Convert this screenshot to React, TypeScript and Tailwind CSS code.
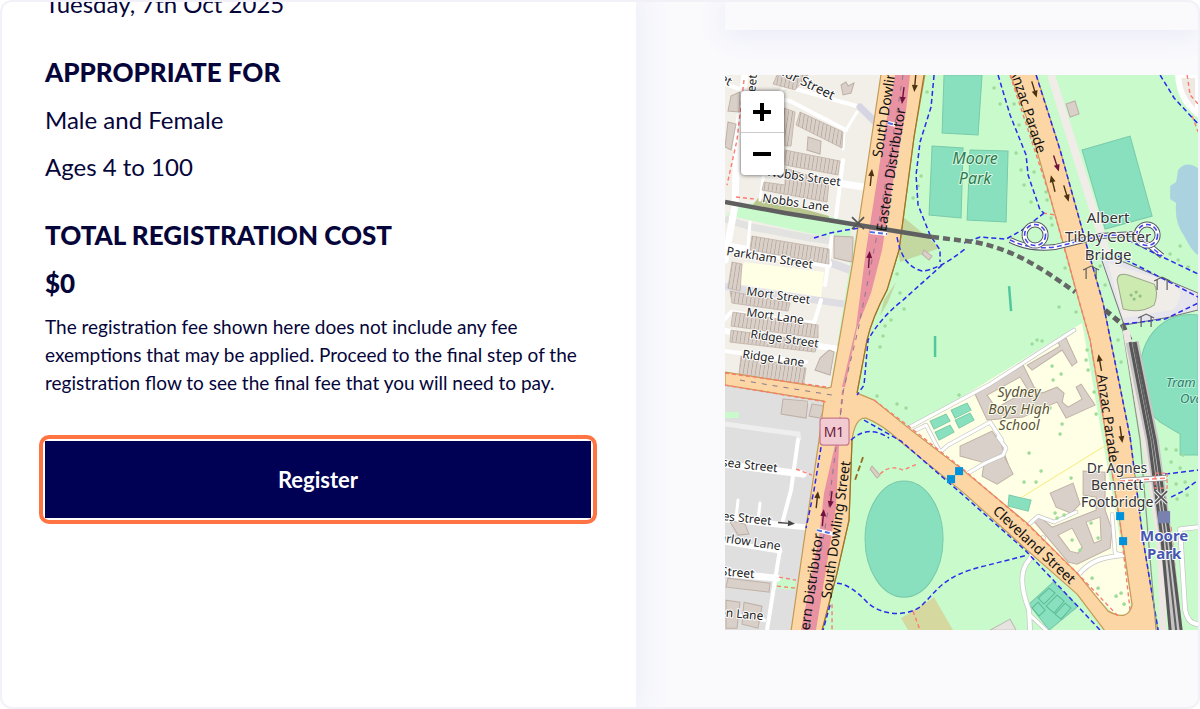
import React from "react";

type Pt = { x: number; y: number };

type Label = {
  text: string;
  x: number;
  y: number;
  angle?: number;
  size?: number;
  anchor?: "start" | "middle" | "end";
  kind?: "road" | "bare" | "place" | "park" | "school" | "station" | "oval";
};

const LABELS: Label[] = [
  { text: "South Dowling Street", x: 882, y: 158, angle: -81, size: 14, kind: "bare" },
  { text: "Eastern Distributor", x: 886, y: 232, angle: -81, size: 14, kind: "bare" },
  { text: "South Dowling Street", x: 831, y: 599, angle: -82, size: 14, kind: "bare" },
  { text: "Eastern Distributor", x: 823, y: 534, angle: -82, size: 14, anchor: "end", kind: "bare" },
  { text: "Anzac Parade", x: 1037, y: 154, angle: 72, size: 14, anchor: "end", kind: "bare" },
  { text: "Anzac Parade", x: 1097, y: 375, angle: 82, size: 14, kind: "bare" },
  { text: "Cleveland Street", x: 992, y: 512, angle: 43, size: 14, kind: "bare" },
  { text: "Street", x: 754, y: 108, angle: -85, size: 12 },
  { text: "Street", x: 729, y: 86, angle: 28, size: 12, anchor: "end" },
  { text: "Arthur Street", x: 832, y: 100, angle: 26, size: 13, anchor: "end" },
  { text: "Nobbs Street", x: 840, y: 186, angle: 8, size: 12, anchor: "end" },
  { text: "Nobbs Lane", x: 762, y: 202, angle: 8, size: 12 },
  { text: "Parkham Street", x: 726, y: 255, angle: 9, size: 12 },
  { text: "Mort Street", x: 746, y: 295, angle: 8, size: 12 },
  { text: "Mort Lane", x: 746, y: 316, angle: 8, size: 12 },
  { text: "Ridge Street", x: 750, y: 338, angle: 8, size: 12 },
  { text: "Ridge Lane", x: 742, y: 358, angle: 8, size: 12 },
  { text: "Chelsea Street", x: 777, y: 472, angle: 6, size: 12, anchor: "end" },
  { text: "James Street", x: 771, y: 525, angle: 6, size: 12, anchor: "end" },
  { text: "Marlow Lane", x: 780, y: 550, angle: 8, size: 12, anchor: "end" },
  { text: "High Street", x: 754, y: 578, angle: 5, size: 12, anchor: "end" },
  { text: "Dawson Lane", x: 763, y: 620, angle: 5, size: 12, anchor: "end" },
  { text: "Moore", x: 975, y: 164, size: 16, kind: "park", anchor: "middle" },
  { text: "Park", x: 975, y: 184, size: 16, kind: "park", anchor: "middle" },
  { text: "Albert", x: 1108, y: 223, size: 15, kind: "place", anchor: "middle" },
  { text: "Tibby Cotter", x: 1108, y: 242, size: 15, kind: "place", anchor: "middle" },
  { text: "Bridge", x: 1108, y: 260, size: 15, kind: "place", anchor: "middle" },
  { text: "Sydney", x: 1019, y: 397, size: 14, kind: "school", anchor: "middle" },
  { text: "Boys High", x: 1019, y: 414, size: 14, kind: "school", anchor: "middle" },
  { text: "School", x: 1019, y: 430, size: 14, kind: "school", anchor: "middle" },
  { text: "Dr Agnes", x: 1117, y: 473, size: 14, kind: "place", anchor: "middle" },
  { text: "Bennett", x: 1117, y: 490, size: 14, kind: "place", anchor: "middle" },
  { text: "Footbridge", x: 1117, y: 507, size: 14, kind: "place", anchor: "middle" },
  { text: "Moore", x: 1164, y: 541, size: 15, kind: "station", anchor: "middle" },
  { text: "Park", x: 1164, y: 559, size: 15, kind: "station", anchor: "middle" },
  { text: "Tram", x: 1166, y: 387, size: 13, kind: "oval" },
  { text: "Oval", x: 1180, y: 403, size: 13, kind: "oval" },
];

const LABEL_CLASS: Record<string, string> = {
  road: "fill-[#222222] stroke-white",
  bare: "fill-[#111111] stroke-transparent",
  place: "fill-[#333333] stroke-white/80",
  park: "fill-[#2d7a52] stroke-[#d8f8e0] italic",
  school: "fill-[#5a5436] stroke-[#fffff0] italic",
  station: "fill-[#4657b0] stroke-white font-bold",
  oval: "fill-[#2f7d68] stroke-[#b4efd8] italic",
};

const TERRACES = [
  "777,75 808,75 795,90 773,84",
  "784,108 795,112 791,146 785,146",
  "800,112 843,132 842,148 796,125",
  "785,150 840,161 838,175 785,165",
  "785,168 829,182 827,202 762,190 764,182 785,185",
  "752,236 829,249 829,264 750,250",
  "730,291 790,303 788,311 732,303",
  "733,312 818,325 818,338 731,326",
  "731,330 818,342 815,352 730,342",
  "741,356 806,368 803,388 739,374",
  "732,262 742,264 740,291 728,288",
];

const BUILDINGS = [
  "841,85 846,82 848,86 854,83 851,93 843,95",
  "808,137 821,141 820,154 807,150",
  "731,96 740,92 739,112 728,111",
  "728,122 736,124 731,150 725,147",
  "834,236 853,237 852,262 834,258",
  "829,350 834,352 830,375 815,370 820,358",
  "783,399 808,401 806,418 781,414",
  "812,404 825,406 820,418 809,416",
  "729,520 745,524 749,534 738,535",
  "728,578 770,583 769,592 726,587",
  "726,600 740,602 737,628 726,628",
  "744,602 762,606 758,628 742,624",
  "872,466 880,475 877,478 870,469",
  "924,250 932,256 929,260 922,254",
  "1066,104 1075,101 1079,114 1070,117",
  "975,394 1023,365 1034,387 1042,393 1057,387 1064,393 1062,402 1068,407 1082,399 1076,387 1081,384 1095,405 1066,418 1057,402 1038,410 1023,417 987,420",
  "1027,365 1060,346 1057,341 1066,338 1077,362 1072,366 1062,350 1032,370",
  "960,446 992,431 1001,444 1008,464 994,467 982,462 960,456",
  "984,463 1003,454 1013,474 997,484 982,476",
  "1050,493 1073,483 1080,504 1071,513 1056,507",
  "1033,520 1040,517 1052,527 1096,510 1096,497 1083,495 1083,471 1105,472 1105,510 1112,530 1110,548 1077,564 1068,562",
];

const WHITE_STREETS: { d: string; w?: number }[] = [
  { d: "M725 84 L745 91 L790 101 L846 130", w: 4 },
  { d: "M745 75 L737 140 L735 205 L725 260", w: 7 },
  { d: "M785 86 L860 107", w: 4 },
  { d: "M846 130 L857 112", w: 3 },
  { d: "M844 130 L843 149", w: 3 },
  { d: "M843 160 L836 217", w: 4 },
  { d: "M764 172 L864 187", w: 7 },
  { d: "M764 172 L760 200", w: 3 },
  { d: "M725 246 L828 264", w: 8 },
  { d: "M832 236 L825 285", w: 4 },
  { d: "M750 222 L748 245", w: 3 },
  { d: "M725 319 L731 312 L814 323 L821 300", w: 4 },
  { d: "M725 331 L838 349", w: 6 },
  { d: "M725 351 L806 362", w: 4 },
  { d: "M800 70 L778 94", w: 3 },
  { d: "M725 464 L803 474", w: 7 },
  { d: "M798 440 L791 490 L783 520", w: 4 },
  { d: "M725 519 L804 527", w: 6 },
  { d: "M725 542 L780 551", w: 5 },
  { d: "M780 549 L767 630", w: 4 },
  { d: "M725 573 L777 578", w: 7 },
  { d: "M725 613 L764 620", w: 4 },
  { d: "M738 500 L736 518", w: 3 },
  { d: "M760 503 L758 520", w: 3 },
  { d: "M787 402 L808 402", w: 3 },
];

const PARK_STREETS: { d: string; w?: number }[] = [
  { d: "M908 428 L990 384 L1074 330", w: 3 },
  { d: "M912 432 L926 425 L940 452 L948 445 L990 422 L1002 440", w: 3 },
  { d: "M968 473 L985 463 L1003 455 L1006 448 L998 437", w: 3 },
  { d: "M1028 525 L1038 516 L1054 522 L1076 512", w: 3 },
  { d: "M1078 575 C1090 560 1103 557 1124 555", w: 4 },
  { d: "M1124 555 L1115 553 L1112 514", w: 3 },
  { d: "M1043 538 L1029 560 C1018 572 1022 592 1029 610 L1030 630", w: 4 },
  { d: "M1029 614 L1046 630", w: 3 },
  { d: "M1198 527 L1180 529 L1185 610 Q1188 624 1198 624", w: 4 },
];

const BLUE_PATHS = [
  "M934 75 L931 107 L920 142 L916 175 L918 205 L930 235 L940 250 L940 262",
  "M998 75 L1010 115 L1026 155 L1028 175 L1040 210 L1044 213",
  "M1044 213 L1022 230 L1006 239 L980 237 L964 243",
  "M1036 75 L1060 150 L1087 247 L1103 303 L1130 437",
  "M1160 75 L1174 98 L1198 124",
  "M814 238 L830 233 L846 230 L859 228",
  "M897 237 Q902 266 922 271 Q938 270 965 249",
  "M942 265 L903 300 Q880 318 868 340 L864 385 L857 395",
  "M864 420 L901 441 L962 494 L1025 550 L1100 630",
  "M851 440 Q868 424 889 438",
  "M837 583 Q850 584 867 602 C880 615 905 617 920 607 C938 590 942 576 984 566 L1027 555",
  "M1130 437 L1143 540 L1158 630",
  "M821 447 L814 490 L806 528",
  "M830 605 L823 630",
  "M1118 256 L1150 272 L1198 297",
  "M1124 324 L1165 319 L1198 303",
  "M1128 240 L1152 252 L1198 274",
  "M1165 474 L1198 470",
  "M1171 497 L1183 491 L1198 480",
];

const RED_PATHS = [
  "M744 80 L737 140 L727 185",
  "M736 197 L755 199",
  "M725 385 L827 402",
  "M725 373 L827 387",
  "M1010 75 L1050 197 L1075 287 L1090 340 L1103 417 L1110 460 L1120 523 L1130 610",
  "M1043 213 L1056 215",
  "M796 469 L812 475",
  "M779 577 L796 580",
  "M777 586 L796 588",
  "M880 474 Q890 464 903 470 L917 464",
  "M832 604 L832 630",
  "M913 611 L920 630",
  "M874 400 L911 428 L964 470 L1027 524 L1080 576 L1118 616",
  "M1187 75 L1190 95 L1198 104",
  "M1192 116 L1198 132",
  "M1171 527 L1176 580 L1181 630",
];

const TREES: Pt[] = [
  { x: 994, y: 88 }, { x: 1000, y: 104 }, { x: 1014, y: 104 }, { x: 1019, y: 125 }, { x: 1016, y: 153 },
  { x: 1021, y: 170 }, { x: 1034, y: 172 }, { x: 1024, y: 185 }, { x: 1031, y: 202 }, { x: 1046, y: 192 },
  { x: 1051, y: 218 }, { x: 1052, y: 225 }, { x: 1047, y: 200 }, { x: 921, y: 176 }, { x: 918, y: 186 },
  { x: 913, y: 198 }, { x: 909, y: 160 }, { x: 927, y: 92 }, { x: 897, y: 274 }, { x: 900, y: 293 },
  { x: 904, y: 309 }, { x: 891, y: 320 }, { x: 885, y: 326 }, { x: 880, y: 347 }, { x: 883, y: 336 },
  { x: 897, y: 404 }, { x: 877, y: 396 }, { x: 906, y: 408 }, { x: 959, y: 395 }, { x: 1032, y: 344 },
  { x: 1037, y: 340 }, { x: 1042, y: 341 }, { x: 1052, y: 366 }, { x: 1061, y: 374 }, { x: 1053, y: 380 },
  { x: 1050, y: 408 }, { x: 1062, y: 424 }, { x: 1060, y: 434 }, { x: 1024, y: 482 }, { x: 1036, y: 482 },
  { x: 1029, y: 453 }, { x: 1041, y: 471 }, { x: 1071, y: 478 }, { x: 1055, y: 513 }, { x: 1064, y: 515 },
  { x: 1057, y: 518 }, { x: 1091, y: 523 }, { x: 1098, y: 538 }, { x: 1072, y: 540 }, { x: 1080, y: 550 },
  { x: 1092, y: 578 }, { x: 1098, y: 588 }, { x: 1116, y: 596 }, { x: 1121, y: 593 }, { x: 1124, y: 604 },
  { x: 1166, y: 449 }, { x: 1176, y: 450 }, { x: 1183, y: 455 }, { x: 1171, y: 462 }, { x: 1180, y: 468 },
  { x: 1185, y: 482 }, { x: 1176, y: 484 }, { x: 1187, y: 495 }, { x: 1177, y: 499 }, { x: 1087, y: 350 },
  { x: 1088, y: 370 }, { x: 1086, y: 360 }, { x: 1094, y: 392 }, { x: 1096, y: 414 }, { x: 1065, y: 268 },
  { x: 1100, y: 266 }, { x: 1105, y: 285 }, { x: 1118, y: 340 }, { x: 1121, y: 362 }, { x: 1170, y: 254 },
  { x: 1178, y: 260 }, { x: 1188, y: 267 }, { x: 1180, y: 246 }, { x: 1059, y: 307 }, { x: 1076, y: 312 },
];

const ARROWS: (Pt & { angle: number; color: string })[] = [
  { x: 903, y: 95, angle: 187, color: "#70123c" },
  { x: 915, y: 83, angle: 185, color: "#4c3210" },
  { x: 871, y: 178, angle: 6, color: "#4c3210" },
  { x: 869, y: 260, angle: 4, color: "#70123c" },
  { x: 1034, y: 89, angle: 163, color: "#4c3210" },
  { x: 1056, y: 163, angle: 162, color: "#70123c" },
  { x: 1053, y: 184, angle: -14, color: "#4c3210" },
  { x: 1066, y: 193, angle: 163, color: "#4c3210" },
  { x: 1100, y: 363, angle: -10, color: "#4c3210" },
  { x: 1121, y: 434, angle: 172, color: "#4c3210" },
  { x: 817, y: 500, angle: 6, color: "#4c3210" },
  { x: 831, y: 499, angle: 187, color: "#70123c" },
  { x: 823, y: 518, angle: 5, color: "#70123c" },
  { x: 786, y: 523, angle: 94, color: "#444444" },
];

function Roundabout({ x, y }: Pt) {
  return (
    <g fill="none">
      <circle cx={x} cy={y} r="10.5" stroke="#555866" strokeWidth="6" />
      <circle cx={x} cy={y} r="10.5" stroke="#ffffff" strokeWidth="4" />
      <circle cx={x} cy={y} r="10.5" stroke="#4646e8" strokeWidth="1.6" strokeDasharray="5 3" />
    </g>
  );
}

function Cross({ x, y, r }: Pt & { r: number }) {
  return (
    <path
      d={`M${x - r} ${y - r} L${x + r} ${y + r} M${x + r} ${y - r} L${x - r} ${y + r}`}
      stroke="#555555"
      strokeWidth="1.7"
      fill="none"
    />
  );
}

function Gate({ x, y }: Pt) {
  return (
    <path
      d={`M${x - 8} ${y - 3} L${x} ${y - 7} L${x + 8} ${y - 3} M${x - 5} ${y - 5} V${y + 6} M${x + 5} ${y - 5} V${y + 6}`}
      stroke="#5c5c5c"
      strokeWidth="1.2"
      fill="none"
    />
  );
}

function StreetMap() {
  return (
    <svg
      viewBox="725 75 473 555"
      preserveAspectRatio="xMinYMin slice"
      className="block h-full w-full font-['Noto_Sans','Open_Sans',sans-serif]"
      role="img"
      aria-label="Map of Moore Park"
    >
      <defs>
        <pattern id="terrace" width="4" height="20" patternUnits="userSpaceOnUse" patternTransform="rotate(9)">
          <rect width="4" height="20" fill="#d9d0c9" />
          <path d="M0 0 V20" stroke="#b5a498" strokeWidth="1.4" />
        </pattern>
      </defs>

      {/* Land use */}
      <rect x="725" y="75" width="473" height="555" fill="#c8facc" />
      <polygon points="725,75 885,75 850,265 829,395 725,380" fill="#f2efe9" />
      <polygon points="725,380 832,392 818,445 791,630 725,630" fill="#dfdfdf" />
      <polygon points="740,206 765,200 852,222 850,242 726,215" fill="#c8facc" />
      <polygon points="758,198 800,208 829,216 829,219 752,206" fill="#b8c68e" />
      <path d="M725 219 L752 227 L810 238 L854 244" stroke="#e2e2e0" strokeWidth="7" fill="none" />
      <path d="M725 286 L745 290 L844 304" stroke="#dddde3" strokeWidth="7" fill="none" />
      <path d="M828 262 L850 270" stroke="#dddde3" strokeWidth="8" fill="none" />
      <polygon points="744,262 824,272 821,297 738,284" fill="#ffffe5" />
      <rect x="725" y="412" width="14" height="6" fill="#c8facc" />
      <path d="M725 424 L798 434 L799 440" stroke="#eeeeee" strokeWidth="5" fill="none" />
      <polygon points="777,577 796,580 795,590 776,588" fill="#c8facc" />
      <polygon points="901,215 926,236 940,248 900,262 896,240" fill="#c3d7a0" />
      <polygon points="896,282 888,302 880,316 884,300" fill="#c3d7a0" />
      <polygon points="901,618 934,597 953,630 908,630" fill="#d6d99f" />
      <polygon points="908,430 1082,323 1131,600 1128,613 1116,616 1072,573 1000,505" fill="#ffffe5" />
      <path d="M1022 497 L1106 445" stroke="#f8ec80" strokeWidth="1" />
      <path
        d="M1198 75 H1178 Q1179 100 1198 114 Z"
        fill="#eee9e2"
        stroke="#ffffff"
        strokeWidth="6"
      />
      <polygon points="990,630 1010,619 1016,630" fill="#e6e4e0" stroke="#bfb8b0" strokeWidth="1" />
      <path d="M1051 75 L1098 225 L1107 255" stroke="#f0ece8" strokeWidth="8" fill="none" />
      <path d="M1101 258 L1114 258 L1198 293 V310 L1170 317 L1124 325 Z" fill="#e6e4ec" stroke="#777777" strokeWidth="1" />
      <path d="M1108 263 L1166 281 Q1182 287 1180 297 Q1178 306 1172 310 L1123 318 Z" fill="#f0ede8" />
      <path d="M1117 280 Q1118 272 1128 275 L1154 284 Q1159 292 1154 305 Q1140 314 1123 309 Z" fill="#cdebb0" stroke="#9aa68c" strokeWidth="1" />
      <g fill="#8fbf86">
        <circle cx="1131" cy="295" r="1.6" />
        <circle cx="1136" cy="292" r="1.6" />
        <circle cx="1140" cy="296" r="1.6" />
        <circle cx="1134" cy="299" r="1.6" />
      </g>
      <path
        d="M1198 168 Q1185 160 1178 170 L1176 182 L1170 186 L1170 199 L1176 203 Q1174 222 1184 236 Q1192 252 1198 255 Z"
        fill="#aad3df"
      />

      {/* Sports grounds */}
      <g fill="#88e0be" stroke="#79caa9" strokeWidth="1">
        <polygon points="944,75 982,75 978,135 942,133" />
        <polygon points="932,146 963,148 961,218 929,215" />
        <polygon points="970,150 1008,151 1006,222 967,220" />
        <polygon points="1082,150 1130,136 1152,216 1105,229" />
        <ellipse cx="904" cy="539" rx="39" ry="58" />
        <path d="M1198 315 C1165 311 1143 334 1140 366 C1138 390 1145 410 1160 422 L1180 434 V455 H1198 Z" />
        <polygon points="1009,495 1031,500 1028,511 1008,506" />
        <polygon points="1053,582 1078,606 1049,630 1029,604" />
        <polygon points="930,421 946,414 950,421 934,429" />
        <polygon points="935,432 950,425 954,432 939,440" />
        <polygon points="951,410 967,403 971,410 955,418" />
        <polygon points="955,420 970,413 974,420 959,428" />
      </g>
      <g fill="none" stroke="#5dba96" strokeWidth="1">
        <path d="M1049 588 L1055 593 L1044 604 L1038 598 Z M1057 595 L1064 601 L1054 613 L1046 606 Z M1065 603 L1071 608 L1061 619 L1055 614 Z M1038 602 L1045 610 L1039 616 L1032 608 Z" />
      </g>
      <path d="M1009 286 L1011 311 M935 336 V357" stroke="#52c79d" strokeWidth="2.5" fill="none" />

      {/* Side streets */}
      <g fill="none" strokeLinejoin="round" strokeLinecap="round">
        {WHITE_STREETS.map((s) => (
          <path key={s.d} d={s.d} stroke="#ffffff" strokeWidth={s.w} />
        ))}
        <path d="M860 107 L874 121" stroke="#d5d5e4" strokeWidth="7" />
      </g>

      {/* Buildings */}
      {TERRACES.map((p) => (
        <polygon key={p} points={p} fill="url(#terrace)" stroke="#c0b1a6" strokeWidth="0.8" />
      ))}
      {BUILDINGS.map((p) => (
        <polygon key={p} points={p} fill="#d9d0c9" stroke="#bfb0a6" strokeWidth="1" />
      ))}
      <g fill="#ffffe5" stroke="#bfb0a6" strokeWidth="1">
        <polygon points="987,395 1020,377 1028,390 996,408" />
        <polygon points="1058,535 1072,528 1082,547 1078,553 1070,551" />
        <polygon points="1086,522 1100,517 1101,540 1094,543" />
      </g>
      <g fill="none" strokeLinejoin="round" strokeLinecap="round">
        {PARK_STREETS.map((s) => (
          <path key={`edge-${s.d}`} d={s.d} stroke="#c6c6c6" strokeWidth={(s.w ?? 3) + 1.4} />
        ))}
        {PARK_STREETS.map((s) => (
          <path key={s.d} d={s.d} stroke="#ffffff" strokeWidth={s.w} />
        ))}
      </g>

      {TREES.map((t) => (
        <circle key={`${t.x}-${t.y}`} cx={t.x} cy={t.y} r="1.8" fill="#9fdc9b" />
      ))}

      {/* Main roads */}
      <g fill="#fcd6a4" stroke="#c49a55" strokeWidth="1.2" strokeLinejoin="round">
        <path d="M725 372 L827 388 L831 387 L841 330 L853 260 L864 188 L881 74 L925 74 L914 137 L899 250 L887 290 Q872 318 867 340 L857 393 L874 400 L911 430 L963 470 L1027 523 L1077 573 L1108 611 Q1128 622 1132 605 L1120 523 L1110 460 L1103 417 L1090 340 L1075 287 L1067 257 L1050 197 L1030 127 L1010 74 L1036 74 L1060 150 L1087 247 L1103 303 L1130 437 L1143 540 L1158 631 L1105 631 L1077 594 L1027 550 L964 493 L901 442 Q882 424 866 418 Q855 417 852 440 L849 520 L837 573 L822 631 L791 631 L806 527 L819 440 L824 401 L725 385 Z" />
      </g>
      <path d="M924 75 L914 137 L899 250 L887 290 Q872 318 867 340 L857 393 M852 440 L849 520 L837 573 L822 630" stroke="#9c7424" strokeWidth="1.2" fill="none" />
      <path d="M895 75 L910 75 L906 110 L891 193 L882 250 L871 293 L857 328 L845 387 L842 387 L856 327 L866 250 L886 123 Z" fill="#e892a2" />
      <path d="M835 445 L839 445 L836 507 L827 563 L816 630 L801 630 L819 537 L824 493 Z" fill="#e892a2" />
      <path d="M843 390 L840 418" stroke="#dc8c9c" strokeWidth="2" strokeDasharray="5 4" />
      <g stroke="#8c7a8e" strokeWidth="1" strokeDasharray="5 6" fill="none">
        <path d="M903 75 L876 240 L858 330 L843 392 L840 418 M836 447 L828 510 L808 630 M740 380 L832 395" />
      </g>

      {/* Foot and cycle paths */}
      <g fill="none" stroke="#ff7b70" strokeWidth="1.4" strokeDasharray="4 3">
        {RED_PATHS.map((d) => (
          <path key={d} d={d} />
        ))}
      </g>
      <path d="M1010 240 Q1030 250 1055 247 L1100 236 L1134 234 L1150 246 L1162 256" stroke="#555866" strokeWidth="6" fill="none" />
      <path d="M1010 240 Q1030 250 1055 247 L1100 236 L1134 234 L1150 246 L1162 256" stroke="#ffffff" strokeWidth="4" fill="none" />
      <path d="M1010 240 Q1030 250 1055 247 L1100 236 L1134 234 L1150 246 L1162 256" stroke="#4646e8" strokeWidth="1.5" strokeDasharray="5 3" fill="none" />
      <g fill="none" stroke="#2b2bec" strokeWidth="1.5" strokeDasharray="5 3">
        {BLUE_PATHS.map((d) => (
          <path key={d} d={d} />
        ))}
      </g>
      <path d="M863 457 L855 480" stroke="#966a20" strokeWidth="1.8" strokeDasharray="6 3" />
      <Roundabout x={1035} y={235} />
      <Roundabout x={1147} y={235} />

      {/* Railway */}
      <g fill="none">
        <path d="M725 202 L785 213 L858 225 L932 237" stroke="#5f5f5f" strokeWidth="4.5" />
        <path d="M932 237 L975 242 C1010 249 1035 263 1075 292" stroke="#666666" strokeWidth="4.5" strokeDasharray="7 4" />
        <path d="M1105 310 L1122 324 L1131 342" stroke="#5f5f5f" strokeWidth="5" strokeDasharray="7 4" />
        <path d="M1122 325 L1140 440 L1156 630" stroke="#8f9885" strokeWidth="1.2" />
        <path d="M1126 330 L1145 440 L1160 540 L1163 630" stroke="#eee6e2" strokeWidth="7" />
        <path d="M1132 342 L1152 440 L1166 540 L1176 630" stroke="#c6c4c4" strokeWidth="13" />
        <path d="M1130 342 L1149 440 L1162 540 L1170 630 M1135 342 L1155 440 L1170 540 L1181 630" stroke="#575757" strokeWidth="3" />
        <path d="M1133 342 L1152 440 L1166 540 L1176 630" stroke="#5f5f5f" strokeWidth="2" />
      </g>
      <path d="M1120 481 L1166 478" stroke="#888888" strokeWidth="6" />
      <path d="M1120 481 L1166 478" stroke="#ffffff" strokeWidth="4.5" />
      <path d="M1120 481 L1166 478" stroke="#f48078" strokeWidth="1.5" strokeDasharray="5 3" />
      <path d="M1155 473 H1167 V488 H1155 Z" fill="none" stroke="#f48078" strokeWidth="1.2" strokeDasharray="4 2" />
      <Cross x={858} y={223} r={6} />
      <path d="M1155 491 L1167 503 M1167 491 L1155 503" stroke="#e8e8e8" strokeWidth="4" />
      <Cross x={1161} y={497} r={6} />
      <Gate x={1091} y={273} />
      <Gate x={1162} y={284} />
      <Gate x={1146} y={321} />
      <g strokeWidth="4" fill="none">
        <path d="M888 123 L896 125 M870 232 L887 234 M817 530 L834 534" stroke="#ffffff" />
        <path d="M888 123 L896 125 M870 232 L887 234 M817 530 L834 534" stroke="#5070e0" strokeWidth="2" strokeDasharray="5 3" />
      </g>

      {ARROWS.map((a) => (
        <g key={`${a.x}-${a.y}`} transform={`translate(${a.x} ${a.y}) rotate(${a.angle})`}>
          <path d="M0 8 V-3" stroke={a.color} strokeWidth="1.4" />
          <path d="M-3 -2 L0 -9 L3 -2 Z" fill={a.color} />
        </g>
      ))}

      {/* Stops and markers */}
      <g fill="#0092da">
        <rect x="955" y="467" width="8" height="8" />
        <rect x="947" y="475" width="8" height="8" />
        <rect x="1116" y="512" width="8" height="8" />
        <rect x="1119" y="537" width="8" height="8" />
      </g>
      <rect x="1158" y="511" width="12" height="12" fill="#7981b0" />

      {LABELS.map((l) => (
        <text
          key={`${l.text}-${l.x}-${l.y}`}
          x={l.x}
          y={l.y}
          fontSize={l.size}
          textAnchor={l.anchor ?? "start"}
          transform={`rotate(${l.angle ?? 0} ${l.x} ${l.y})`}
          strokeWidth="2"
          strokeLinejoin="round"
          paintOrder="stroke"
          className={LABEL_CLASS[l.kind ?? "road"]}
        >
          {l.text}
        </text>
      ))}

      <rect x="820" y="418" width="29" height="27" rx="3" fill="#f2cbd2" stroke="#c77a8c" strokeWidth="1.2" />
      <text x="834" y="437" fontSize="14" textAnchor="middle" fill="#6b1c3c">
        M1
      </text>
    </svg>
  );
}

function ZoomControl() {
  return (
    <div className="absolute top-4 left-4 flex w-[43px] flex-col divide-y divide-[#cccccc] overflow-hidden rounded-sm bg-white shadow-[0_0_4px_rgba(0,0,0,0.65)]">
      <button type="button" aria-label="Zoom in" className="flex h-[42px] items-center justify-center">
        <svg viewBox="0 0 18 18" className="h-[18px] w-[18px]" fill="#000000">
          <path d="M7 0h4v7h7v4h-7v7H7v-7H0V7h7z" />
        </svg>
      </button>
      <button type="button" aria-label="Zoom out" className="flex h-[42px] items-center justify-center">
        <svg viewBox="0 0 18 18" className="h-[18px] w-[18px]" fill="#000000">
          <path d="M0 7h18v4H0z" />
        </svg>
      </button>
    </div>
  );
}

export default function App() {
  return (
    <div className="flex min-h-screen overflow-hidden rounded-xl border-2 border-[#f1f1f7] bg-[#fafafd] font-['Lato',sans-serif] text-[#05053a]">
      <main className="z-10 w-[53%] overflow-hidden bg-white pr-[45px] pl-[43px] shadow-[0_0_28px_8px_#eeeff9]">
        <p className="-mt-3 text-2xl leading-7">Tuesday, 7th Oct 2025</p>
        <h2 className="mt-9 text-[26px] leading-9 font-black">APPROPRIATE FOR</h2>
        <p className="mt-4 text-2xl leading-7">Male and Female</p>
        <p className="mt-[19px] text-2xl leading-7">Ages 4 to 100</p>
        <h2 className="mt-9 text-[26px] leading-9 font-black">TOTAL REGISTRATION COST</h2>
        <p className="mt-3 text-[26px] leading-9 font-black">$0</p>
        <p className="mt-3 pr-3 text-[19px] leading-7">
          The registration fee shown here does not include any fee exemptions that may be applied. Proceed to the
          final step of the registration flow to see the final fee that you will need to pay.
        </p>
        <div className="-mx-[6px] mt-[38px] rounded-[10px] border-4 border-[#ff7442] p-0.5">
          <button type="button" className="block h-[77px] w-full bg-[#000054] text-[22px] font-bold text-white">
            Register
          </button>
        </div>
      </main>
      <aside className="flex flex-1 flex-col pl-[89px]">
        <div className="h-7 bg-[#fafafd] shadow-[0_4px_28px_2px_#e9eaf6]" />
        <div className="relative mt-[45px] h-[555px] overflow-hidden">
          <StreetMap />
          <ZoomControl />
        </div>
      </aside>
    </div>
  );
}
